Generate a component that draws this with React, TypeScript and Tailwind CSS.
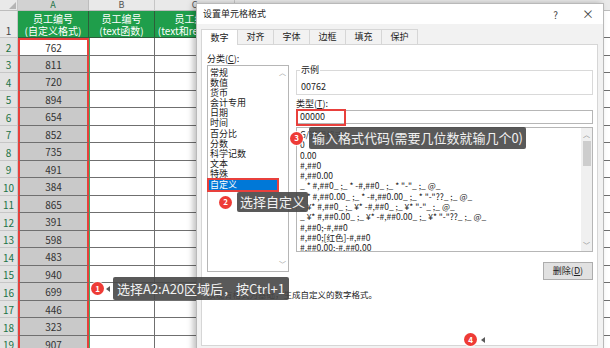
import React from "react";

const values = [762, 811, 720, 894, 654, 852, 735, 491, 384, 865, 391, 598, 483, 940, 699, 446, 323, 907];

const categories = ["常规", "数值", "货币", "会计专用", "日期", "时间", "百分比", "分数", "科学记数", "文本", "特殊", "自定义"];

const formats = [
  "G/通用格式",
  "0",
  "0.00",
  "#,##0",
  "#,##0.00",
  '_ * #,##0_ ;_ * -#,##0_ ;_ * "-"_ ;_ @_ ',
  '_ * #,##0.00_ ;_ * -#,##0.00_ ;_ * "-"??_ ;_ @_ ',
  '_ ¥* #,##0_ ;_ ¥* -#,##0_ ;_ ¥* "-"_ ;_ @_ ',
  '_ ¥* #,##0.00_ ;_ ¥* -#,##0.00_ ;_ ¥* "-"??_ ;_ @_ ',
  "#,##0;-#,##0",
  "#,##0;[红色]-#,##0",
  "#,##0.00;-#,##0.00",
];

const tabs = ["数字", "对齐", "字体", "边框", "填充", "保护"];

const Badge = ({ n }: { n: number }) => (
  <div className="w-[13px] h-[13px] rounded-full bg-[#ee3b36] text-white text-[8px] font-bold leading-none flex items-center justify-center shadow-[0_0_0_1px_rgba(255,255,255,0.8)]">
    {n}
  </div>
);

const Sheet: React.FC = () => (
  <div className="flex flex-col w-[610px] text-[10px]">
    {/* column letters */}
    <div className="flex h-[11px] bg-[#e9e9e9] text-[#555] text-[9px] border-b border-[#bdbdbd]">
      <div className="w-[18px] shrink-0 border-r border-[#c6c6c6] flex items-end justify-end p-[1px]">
        <div className="w-0 h-0 border-l-[7px] border-l-transparent border-b-[7px] border-b-[#b5b5b5]" />
      </div>
      <div className="w-[71px] shrink-0 bg-[#d2d2d2] border-r border-[#bdbdbd] flex items-center justify-center leading-[10px] text-[#217346]">A</div>
      <div className="w-[66px] shrink-0 border-r border-[#c6c6c6] flex items-center justify-center leading-[10px]">B</div>
      <div className="w-[80px] shrink-0 border-r border-[#c6c6c6] flex items-center justify-center leading-[10px]">C</div>
      <div className="flex-1" />
    </div>
    {/* header row */}
    <div className="flex h-[27px]">
      <div className="w-[18px] shrink-0 bg-[#e9e9e9] border-r border-b border-[#c6c6c6] flex items-end justify-center text-[#444] leading-none pb-[1px]">1</div>
      <div className="w-[71px] shrink-0 bg-[#1f9e4b] border-r border-b border-[#2d5e3a] text-white flex flex-col items-center justify-center leading-[12px] pt-[2px] whitespace-nowrap overflow-hidden">
        <span>员工编号</span>
        <span>(自定义格式)</span>
      </div>
      <div className="w-[66px] shrink-0 bg-[#1f9e4b] border-r border-b border-[#2d5e3a] text-white flex flex-col items-center justify-center leading-[12px] pt-[2px] whitespace-nowrap overflow-hidden">
        <span>员工编号</span>
        <span>(text函数)</span>
      </div>
      <div className="w-[80px] shrink-0 bg-[#1f9e4b] border-r border-b border-[#2d5e3a] text-white flex flex-col items-center justify-center leading-[12px] pt-[2px] whitespace-nowrap overflow-hidden">
        <span>员工编号</span>
        <span>(text和rept函数)</span>
      </div>
      <div className="flex-1 border-b border-[#6f6f6f]" />
    </div>
    {values.map((v, i) => (
      <div key={v} className={`flex ${i % 2 === 0 ? "h-[18px]" : "h-[17px]"}`}>
        <div className="w-[18px] shrink-0 bg-[#e2e2e2] border-r border-b border-[#c6c6c6] flex items-end justify-center text-[#217346] leading-none pb-[2px]">
          {i + 2}
        </div>
        <div
          className={`w-[71px] shrink-0 border-x-2 border-x-[#e8403c] border-b border-b-[#6f6f6f] flex items-center justify-center text-[#333] ${
            i === 0 ? "bg-white border-t-2 border-t-[#e8403c]" : "bg-[#c9c9c9]"
          }`}
        >
          {v}
        </div>
        <div className="w-[66px] shrink-0 border-l border-l-[#3fae6a] border-r border-r-[#6f6f6f] border-b border-b-[#6f6f6f]" />
        <div className="w-[80px] shrink-0 border-r border-r-[#6f6f6f] border-b border-b-[#6f6f6f]" />
        <div className="flex-1 border-b border-b-[#6f6f6f]" />
      </div>
    ))}
  </div>
);

const Dialog: React.FC = () => (
  <div className="absolute left-[196px] top-[3px] w-[408px] h-[350px] bg-[#f2f2f2] border border-[#b9b9b9] shadow-[-3px_0_6px_rgba(0,0,0,0.25)] text-[9px] text-[#222] flex flex-col">
    {/* title bar */}
    <div className="h-[20px] bg-white flex items-center pl-[6px] pr-[9px] shrink-0">
      <span>设置单元格格式</span>
      <span className="ml-auto text-[10px] text-[#444]">?</span>
      <span className="ml-[24px] text-[12px] text-[#444] leading-none">×</span>
    </div>
    {/* tabs */}
    <div className="flex ml-[4px] mt-[5px] h-[15px] shrink-0 items-end">
      {tabs.map((t, i) => (
        <div
          key={t}
          className={`h-[15px] flex items-center justify-center border-t border-x border-[#d6d6d6] -ml-px first:ml-0 ${
            i === 0 ? "bg-white w-[37px] h-[16px] relative z-10 -mb-px" : "bg-[#f2f2f2] w-[37px]"
          }`}
        >
          {t}
        </div>
      ))}
    </div>
    {/* panel */}
    <div className="ml-[4px] w-[397px] h-[302px] bg-white border border-[#d6d6d6] shrink-0 flex flex-col pt-[7px] pl-[5px]">
      <div className="flex items-start gap-[7px]">
        {/* category column */}
        <div className="w-[82px] flex flex-col shrink-0">
          <div className="h-[13px] leading-[13px]">分类(<span className="underline">C</span>):</div>
          <div className="h-[207px] border border-[#b6b6b6] flex">
            <div className="flex-1 flex flex-col pt-[1.5px] pl-[1px]">
              {categories.map((c, i) => (
                <div
                  key={c}
                  className={`h-[10.2px] leading-[10.2px] pl-[1px] ${
                    i === categories.length - 1
                      ? "bg-[#0078d7] text-white outline-2 outline-solid outline-[#e8403c]"
                      : ""
                  }`}
                >
                  {c}
                </div>
              ))}
            </div>
            <div className="w-[11px] flex flex-col items-center justify-between py-[3px] text-[#9a9a9a] text-[7px] leading-none">
              <span>︿</span>
              <span>﹀</span>
            </div>
          </div>
        </div>
        {/* right column */}
        <div className="w-[297px] flex flex-col mt-[18px]">
          <div className="relative h-[25px] border border-[#d9d9d9] pt-[10px] pl-[4px] leading-[12px]">
            <span className="absolute left-[3px] -top-[7px] bg-white px-[1px]">示例</span>
            00762
          </div>
          <div className="h-[13px] leading-[13px] mt-[2px]">类型(<span className="underline">T</span>):</div>
          <div className="h-[14px] border border-[#b6b6b6] flex items-center pl-[3px] relative">
            <div className="absolute -left-[1px] -top-[2px] w-[50px] h-[17px] border-2 border-[#e8403c]" />
            00000
          </div>
          <div className="h-[125px] mt-[3px] border border-[#b6b6b6] flex">
            <div className="flex-1 flex flex-col pt-[1px] pl-[3px] overflow-hidden whitespace-pre text-[8.5px]">
              {formats.map((f) => (
                <div key={f} className="h-[10.3px] leading-[10.3px]">{f}</div>
              ))}
            </div>
            <div className="w-[11px] bg-[#f0f0f0] flex flex-col items-center pt-[3px] pb-[2px] text-[#8a8a8a] text-[7px] leading-none">
              <span>︿</span>
              <div className="w-[8px] h-[25px] bg-[#cdcdcd] mt-[3px]" />
              <span className="mt-auto">﹀</span>
            </div>
          </div>
          <div className="mt-[10px] self-end w-[50px] h-[18px] bg-[#e1e1e1] border border-[#adadad] flex items-center justify-center">
            删除(<span className="underline">D</span>)
          </div>
        </div>
      </div>
      <div className="mt-[9px] h-[10px] leading-[10px] text-[8.5px]">以现有格式为基础，生成自定义的数字格式。</div>
    </div>
  </div>
);

const Callouts: React.FC = () => (
  <>
    {/* 1 */}
    <div className="absolute left-[91px] top-[277px] flex items-center">
      <Badge n={1} />
      <div className="ml-[2px] w-0 h-0 border-y-[3px] border-y-transparent border-r-[4px] border-r-[#5a5a5a]" />
      <div className="ml-[3px] h-[23px] px-[4px] flex items-center bg-[#474747]/90 text-[#f2f2f2] text-[13px] rounded-[2px] whitespace-nowrap">
        选择A2:A20区域后，按Ctrl+1
      </div>
    </div>
    {/* 2 */}
    <div className="absolute left-[219px] top-[192px] flex items-center">
      <Badge n={2} />
      <div className="ml-[5px] h-[20px] px-[3px] flex items-center bg-[#474747]/90 text-[#f2f2f2] text-[13px] rounded-[2px] whitespace-nowrap">
        选择自定义
      </div>
    </div>
    {/* 3 */}
    <div className="absolute left-[290px] top-[127px] flex items-center">
      <Badge n={3} />
      <div className="ml-[6px] h-[22px] px-[3px] flex items-center bg-[#474747]/90 text-[#f2f2f2] text-[13px] rounded-[2px] whitespace-nowrap">
        输入格式代码(需要几位数就输几个0)
      </div>
    </div>
    {/* 4 */}
    <div className="absolute left-[464px] top-[333px] flex items-center">
      <Badge n={4} />
      <div className="ml-[4px] w-0 h-0 border-y-[3px] border-y-transparent border-r-[4px] border-r-[#5a5a5a]" />
    </div>
  </>
);

export default function App() {
  return (
    <div className="relative w-[610px] h-[348px] overflow-hidden bg-white font-['Noto_Sans_CJK_SC','Noto_Sans',sans-serif]">
      <Sheet />
      <Dialog />
      <Callouts />
    </div>
  );
}
